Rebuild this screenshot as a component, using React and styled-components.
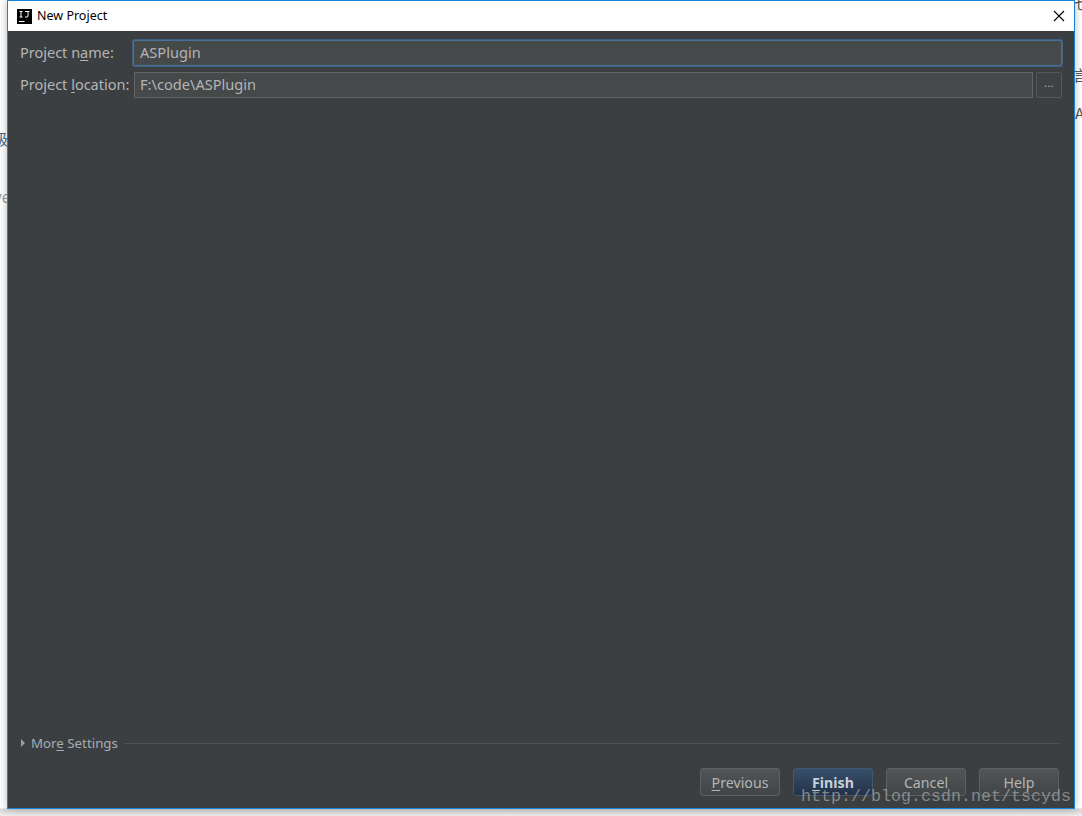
import React from 'react';
import styled, { createGlobalStyle } from 'styled-components';

const GlobalStyle = createGlobalStyle`
  html, body {
    margin: 0;
    padding: 0;
    background: #ffffff;
  }
  body {
    font-family: 'Noto Sans', 'Open Sans', sans-serif;
    overflow: hidden;
  }
`;

const Desktop = styled.div`
  position: relative;
  width: 1082px;
  height: 816px;
  overflow: hidden;
  background: linear-gradient(to bottom, #ffffff 0, #ffffff 808px, #d6d6d6 809px, #ededed 816px);
`;

const BackGlyph = styled.span`
  position: absolute;
  left: ${(p) => p.$x}px;
  top: ${(p) => p.$y}px;
  font-family: 'Noto Sans CJK SC', 'Noto Sans', sans-serif;
  font-size: 15px;
  line-height: 18px;
  color: ${(p) => p.$color || '#4a6a8a'};
`;

const Window = styled.div`
  position: absolute;
  left: 7px;
  top: 0;
  width: 1068px;
  height: 809px;
  box-sizing: border-box;
  border: 1px solid #1883d7;
  display: flex;
  flex-direction: column;
  background: #3c3f41;
  box-shadow: 0 0 8px rgba(0, 0, 0, 0.28);
`;

const TitleBar = styled.div`
  height: 30px;
  flex: none;
  display: flex;
  align-items: center;
  background: #ffffff;
  padding: 0 9px 0 9px;
`;

const AppLogo = styled.svg`
  width: 15px;
  height: 15px;
  flex: none;
  margin-right: 5px;
`;

const Title = styled.div`
  flex: 1;
  font-size: 12.5px;
  line-height: 30px;
  color: #000000;
`;

const CloseIcon = styled.svg`
  width: 12px;
  height: 12px;
  flex: none;
`;

const Content = styled.div`
  flex: 1;
  min-height: 0;
  display: flex;
  flex-direction: column;
  padding: 9px 12px 12px 12px;
`;

const FormRow = styled.div`
  display: flex;
  align-items: center;
  height: 26px;
  margin-bottom: 6px;
`;

const Label = styled.label`
  width: ${(p) => p.$width}px;
  flex: none;
  box-sizing: border-box;
  padding-bottom: 2px;
  font-size: 14.5px;
  color: #b4b4b4;
  white-space: nowrap;
`;

const Mnemonic = styled.span`
  text-decoration: underline;
  text-underline-offset: 2px;
`;

const TextField = styled.div`
  flex: 1;
  height: 26px;
  box-sizing: border-box;
  display: flex;
  align-items: center;
  padding-left: ${(p) => (p.$focused ? 6 : 5)}px;
  padding-bottom: 2px;
  background: #45494a;
  border: 1px solid ${(p) => (p.$focused ? '#4a7199' : '#646464')};
  border-radius: ${(p) => (p.$focused ? 2 : 0)}px;
  box-shadow: ${(p) => (p.$focused ? '0 0 0 1px #3f5f80' : 'none')};
  font-size: 14.6px;
  color: #b4b4b4;
`;

const BrowseButton = styled.div`
  width: 26px;
  height: 26px;
  flex: none;
  box-sizing: border-box;
  margin-left: 3px;
  padding-bottom: 4px;
  border: 1px solid #555859;
  border-radius: 2px;
  background: #3f4244;
  display: flex;
  align-items: center;
  justify-content: center;
  color: #bbbbbb;
  font-size: 10px;
  line-height: 10px;
  letter-spacing: 0.5px;
`;

const Spacer = styled.div`
  flex: 1;
`;

const MoreSettings = styled.div`
  display: flex;
  align-items: center;
  height: 20px;
  padding-right: 3px;
`;

const Arrow = styled.span`
  width: 0;
  height: 0;
  flex: none;
  margin-left: 1px;
  margin-right: 6px;
  border-top: 4px solid transparent;
  border-bottom: 4px solid transparent;
  border-left: 4px solid #9a9d9f;
`;

const MoreLabel = styled.span`
  font-size: 13.3px;
  color: #a5adb3;
  white-space: nowrap;
`;

const Divider = styled.div`
  flex: 1;
  height: 1px;
  margin-left: 6px;
  background: #515355;
`;

const ButtonBar = styled.div`
  display: flex;
  justify-content: flex-end;
  gap: 13px;
  margin-top: 15px;
  padding-right: 3px;
`;

const Button = styled.div`
  width: 80px;
  height: 28px;
  box-sizing: border-box;
  display: flex;
  align-items: center;
  justify-content: center;
  border: 1px solid ${(p) => (p.$primary ? '#41566f' : '#5e6060')};
  border-radius: 3px;
  background: ${(p) =>
    p.$primary
      ? 'linear-gradient(to bottom, #384f6b, #233247)'
      : 'linear-gradient(to bottom, #515557, #414547)'};
  color: ${(p) => (p.$primary ? '#c8d0d8' : '#b4b4b4')};
  font-size: 14.2px;
  font-weight: ${(p) => (p.$primary ? 700 : 400)};
`;

const Watermark = styled.div`
  position: absolute;
  left: 801px;
  top: 787px;
  font-family: 'Liberation Mono', monospace;
  font-size: 16.67px;
  line-height: 20px;
  color: rgba(170, 170, 170, 0.7);
  white-space: nowrap;
`;

const App = () => (
  <Desktop>
    <GlobalStyle />
    <BackGlyph $x={-7} $y={130}>级</BackGlyph>
    <BackGlyph $x={-6} $y={188} $color="#9a9a9a">ve</BackGlyph>
    <BackGlyph $x={1073} $y={-6} $color="#555555">七</BackGlyph>
    <BackGlyph $x={1073} $y={66} $color="#555555">言</BackGlyph>
    <BackGlyph $x={1075} $y={104} $color="#555555">A</BackGlyph>
    <Window>
      <TitleBar>
        <AppLogo viewBox="0 0 15 15">
          <rect width="15" height="15" fill="#000000" />
          <path d="M2.5 2.5h3M4 2.5v5.5M2.5 8h3M8 2.5h4.5M11 2.5v4.5q0 1-1 1H8" fill="none" stroke="#ffffff" strokeWidth="1" />
          <rect x="2" y="12" width="5.5" height="1" fill="#ffffff" />
        </AppLogo>
        <Title>New Project</Title>
        <CloseIcon viewBox="0 0 12 12">
          <path d="M1 1l10 10M11 1L1 11" stroke="#000000" strokeWidth="1.1" fill="none" />
        </CloseIcon>
      </TitleBar>
      <Content>
        <FormRow>
          <Label $width={113}>Project n<Mnemonic>a</Mnemonic>me:</Label>
          <TextField $focused>ASPlugin</TextField>
        </FormRow>
        <FormRow>
          <Label $width={114}>Project <Mnemonic>l</Mnemonic>ocation:</Label>
          <TextField>F:\code\ASPlugin</TextField>
          <BrowseButton>...</BrowseButton>
        </FormRow>
        <Spacer />
        <MoreSettings>
          <Arrow />
          <MoreLabel>Mor<Mnemonic>e</Mnemonic> Settings</MoreLabel>
          <Divider />
        </MoreSettings>
        <ButtonBar>
          <Button><span><Mnemonic>P</Mnemonic>revious</span></Button>
          <Button $primary><span><Mnemonic>F</Mnemonic>inish</span></Button>
          <Button>Cancel</Button>
          <Button>Help</Button>
        </ButtonBar>
      </Content>
    </Window>
    <Watermark>http://blog.csdn.net/tscyds</Watermark>
  </Desktop>
);

export default App;
